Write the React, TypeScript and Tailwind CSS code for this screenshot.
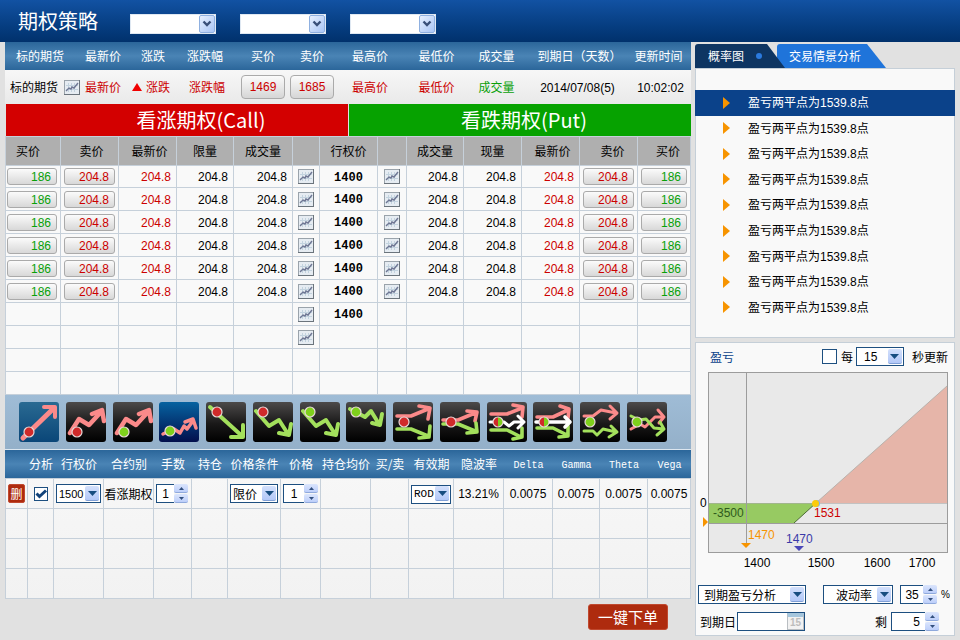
import { useState, type ReactNode } from 'react';
import clsx from 'clsx';

const MONO = "font-['Liberation_Mono','Noto_Sans_CJK_SC',monospace]";
const DIGITS = "font-['Liberation_Sans','Noto_Sans_CJK_SC',sans-serif]";

function Num({ children, className }: { children: ReactNode; className?: string }) {
  return <span className={clsx(DIGITS, className)}>{children}</span>;
}

function ChartGlyph() {
  return (
    <svg viewBox="0 0 16 15" className="block h-[15px] w-4" aria-hidden="true">
      <rect x="0.5" y="0.5" width="15" height="14" fill="#e6ecf2" stroke="#9aa3ab" />
      <path d="M0 14.5h16M15.5 0v15" stroke="#6b747c" />
      <path d="M4.500 3v9M7.500 3v9M10.500 3v9M2 5.500h12M2 9.500h12" stroke="#c3d3df" />
      <path d="M2 11l3-3 2 1 1-2 2 1 4-5" fill="none" stroke="#6f7794" strokeWidth="1.400" />
    </svg>
  );
}

function ChartButton({ label }: { label: string }) {
  return (
    <button type="button" aria-label={label} className="block">
      <ChartGlyph />
    </button>
  );
}

function HeaderSelect({ label }: { label: string }) {
  return (
    <div className="relative h-5 w-[86px]">
      <select
        aria-label={label}
        className="h-5 w-full appearance-none border border-[#dfe8f2] bg-white pl-1 text-xs text-black outline-none"
      >
        <option value=""></option>
      </select>
      <span className="pointer-events-none absolute top-px right-px flex h-[18px] w-4 items-center justify-center rounded-[2px] border border-[#8fb0e0] bg-linear-to-br from-[#e6effd] to-[#a9c5f5]">
        <svg viewBox="0 0 10 8" className="h-2 w-[10px]" aria-hidden="true">
          <path d="M1.500 1.500L5 5l3.500-3.500" fill="none" stroke="#3a5078" strokeWidth="2.400" />
        </svg>
      </span>
    </div>
  );
}

function Dropdown({
  label,
  options,
  width,
  font = 'text-xs',
  pad = 'pl-[2px]',
}: {
  label: string;
  options: string[];
  width: string;
  font?: string;
  pad?: string;
}) {
  return (
    <div className={clsx('relative h-[19px]', width)}>
      <select
        aria-label={label}
        className={clsx(
          'h-[19px] w-full appearance-none border border-[#1d4f80] bg-white leading-4 text-black outline-none',
          font,
          pad,
        )}
      >
        {options.map((o) => (
          <option key={o}>{o}</option>
        ))}
      </select>
      <span className="pointer-events-none absolute top-[2px] right-[2px] flex h-[15px] w-[14px] items-center justify-center rounded-[2px] border-b border-[#7f9fd6] bg-linear-to-b from-[#d3e0fb] to-[#b3c8f8]">
        <svg viewBox="0 0 9 5" className="h-[5px] w-[9px]" aria-hidden="true">
          <path d="M0 0h9L4.500 5z" fill="#174d80" />
        </svg>
      </span>
    </div>
  );
}

function Spinner({
  label,
  initial,
  width,
  align = 'text-center',
}: {
  label: string;
  initial: number;
  width: string;
  align?: string;
}) {
  const [value, setValue] = useState(initial);
  const step =
    'flex h-[9px] w-[14px] items-center justify-center rounded-[2px] border-b border-[#8fa9dc] bg-linear-to-b from-[#dbe5fc] to-[#bdcffa]';
  return (
    <div className="flex h-[19px]">
      <input
        type="text"
        inputMode="numeric"
        aria-label={label}
        value={value}
        onChange={(e) => setValue(Number(e.target.value) || 0)}
        className={clsx(
          'h-[19px] border border-r-0 border-[#1d4f80] bg-white text-xs text-black outline-none',
          DIGITS,
          width,
          align,
        )}
      />
      <div className="flex flex-col gap-px">
        <button type="button" aria-label={`${label} +`} className={step} onClick={() => setValue(value + 1)}>
          <svg viewBox="0 0 5 3" className="h-[3px] w-[5px]" aria-hidden="true">
            <path d="M0 3h5L2.500 0z" fill="#33507f" />
          </svg>
        </button>
        <button type="button" aria-label={`${label} -`} className={step} onClick={() => setValue(value - 1)}>
          <svg viewBox="0 0 5 3" className="h-[3px] w-[5px]" aria-hidden="true">
            <path d="M0 0h5L2.500 3z" fill="#33507f" />
          </svg>
        </button>
      </div>
    </div>
  );
}

function PriceButton({ children, color }: { children: ReactNode; color: string }) {
  return (
    <button
      type="button"
      className={clsx(
        DIGITS,
        'block h-[17px] w-full rounded-[3px] border border-[#aaaaaa] bg-linear-to-b from-[#fbfbfb] to-[#d8d8d8] pr-[5px] text-right leading-4',
        color,
      )}
    >
      {children}
    </button>
  );
}

const RED = 'text-[#cc0000]';
const GREEN = 'text-[#08a008]';

/* ---------- underlying quote ---------- */

const quoteCols = [
  'w-[76px]', 'w-[44px]', 'w-[52px]', 'w-[60px]', 'w-[52px]', 'w-[46px]',
  'w-[70px]', 'w-[63px]', 'w-[57px]', 'w-[105px]', 'w-[61px]',
];
const quoteHeads: [string, string][] = [
  ['标的期货', 'pr-[6px]'],
  ['最新价', ''],
  ['涨跌', 'pl-1'],
  ['涨跌幅', 'pr-1'],
  ['买价', ''],
  ['卖价', ''],
  ['最高价', ''],
  ['最低价', ''],
  ['成交量', ''],
  ['到期日（天数）', 'pl-1'],
  ['更新时间', 'pr-1'],
];

function BigPrice({ children }: { children: ReactNode }) {
  return (
    <button
      type="button"
      className={clsx(
        DIGITS,
        RED,
        'mx-auto block h-6 w-11 rounded-[4px] border border-[#aaaaaa] bg-linear-to-b from-[#fbfbfb] to-[#d6d6d6]',
      )}
    >
      {children}
    </button>
  );
}

function QuoteTable() {
  return (
    <table className="w-full table-fixed border-separate border-spacing-0 text-center whitespace-nowrap">
      <colgroup>
        {quoteCols.map((w, i) => (
          <col key={i} className={w} />
        ))}
      </colgroup>
      <thead className="bg-linear-to-b from-[#2b669a] via-[#4a84b5] to-[#2b669a] text-white">
        <tr>
          {quoteHeads.map(([h, pad]) => (
            <th key={h} scope="col" className="h-7 p-0 font-normal">
              <span className={pad}>{h}</span>
            </th>
          ))}
        </tr>
      </thead>
      <tbody className="bg-linear-to-b from-[#f7f7f7] to-[#e9e9e9]">
        <tr>
          <td className="h-[34px] p-0">
            <div className="flex items-center gap-[6px] pl-[5px]">
              标的期货
              <ChartButton label="标的期货走势图" />
            </div>
          </td>
          <td className={clsx('p-0', RED)}>最新价</td>
          <td className={clsx('p-0', RED)}>
            <div className="flex items-center justify-center gap-1">
              <svg viewBox="0 0 10 8" className="h-2 w-[10px]" aria-hidden="true">
                <path d="M0 8h10L5 0z" fill="#f00000" />
              </svg>
              涨跌
            </div>
          </td>
          <td className={clsx('p-0', RED)}>涨跌幅</td>
          <td className="p-0">
            <BigPrice>1469</BigPrice>
          </td>
          <td className="p-0">
            <BigPrice>1685</BigPrice>
          </td>
          <td className={clsx('p-0', RED)}>最高价</td>
          <td className={clsx('p-0', RED)}>最低价</td>
          <td className={clsx('p-0', GREEN)}>成交量</td>
          <td className="p-0">
            <Num>2014/07/08(5)</Num>
          </td>
          <td className="p-0">
            <Num>10:02:02</Num>
          </td>
        </tr>
      </tbody>
    </table>
  );
}

/* ---------- option chain ---------- */

const chainCols = [
  'w-[56px]', 'w-[58px]', 'w-[58px]', 'w-[57px]', 'w-[59px]', 'w-[27px]', 'w-[58px]',
  'w-[29px]', 'w-[57px]', 'w-[58px]', 'w-[58px]', 'w-[58px]', 'w-[53px]',
];
const chainHeads: [string, string][] = [
  ['买价', 'pr-[10px]'],
  ['卖价', 'pl-1'],
  ['最新价', 'pl-1'],
  ['限量', ''],
  ['成交量', ''],
  ['', ''],
  ['行权价', ''],
  ['', ''],
  ['成交量', ''],
  ['现量', ''],
  ['最新价', 'pl-1'],
  ['卖价', 'pl-2'],
  ['买价', 'pl-2'],
];

const quotes = Array.from({ length: 6 }, () => ({ bid: '186', ask: '204.8', last: '204.8', size: '204.8', volume: '204.8' }));
const strikes = ['1400', '1400', '1400', '1400', '1400', '1400', '1400', '', '', ''];

const cell = 'border-r border-b border-[#c6d0da] p-0';
const numCell = 'border-r border-b border-[#c6d0da] py-0 pr-[5px] pl-0 text-right';

function ChainTable() {
  return (
    <table className="w-full table-fixed border-separate border-spacing-0 bg-[#f9f9f9] whitespace-nowrap">
      <colgroup>
        {chainCols.map((w, i) => (
          <col key={i} className={w} />
        ))}
      </colgroup>
      <thead className="bg-[#afafaf]">
        <tr>
          {chainHeads.map(([h, pad], i) => (
            <th
              key={i}
              scope="col"
              className="h-[30px] border-t border-r border-b border-[#c6d0da] p-0 text-center font-normal first:border-l"
            >
              <span className={pad}>{h}</span>
            </th>
          ))}
        </tr>
      </thead>
      <tbody>
        {strikes.map((strike, i) => {
          const q = quotes[i];
          return (
            <tr key={i} className="h-[23px] first:h-[22px]">
              <td className={clsx(cell, 'border-l')}>
                {q && (
                  <div className="pr-[3px] pl-px">
                    <PriceButton color={GREEN}>{q.bid}</PriceButton>
                  </div>
                )}
              </td>
              <td className={cell}>
                {q && (
                  <div className="px-[3px]">
                    <PriceButton color={RED}>{q.ask}</PriceButton>
                  </div>
                )}
              </td>
              <td className={numCell}>{q && <Num className={RED}>{q.last}</Num>}</td>
              <td className={numCell}>{q && <Num>{q.size}</Num>}</td>
              <td className={numCell}>{q && <Num>{q.volume}</Num>}</td>
              <td className={cell}>
                {i < 8 && (
                  <div className="flex justify-center">
                    <ChartButton label="看涨走势图" />
                  </div>
                )}
              </td>
              <td className={clsx(cell, 'text-center')}>
                <span className={clsx(MONO, 'font-bold')}>{strike}</span>
              </td>
              <td className={cell}>
                {q && (
                  <div className="flex justify-center">
                    <ChartButton label="看跌走势图" />
                  </div>
                )}
              </td>
              <td className={numCell}>{q && <Num>{q.volume}</Num>}</td>
              <td className={numCell}>{q && <Num>{q.size}</Num>}</td>
              <td className={numCell}>{q && <Num className={RED}>{q.last}</Num>}</td>
              <td className={cell}>
                {q && (
                  <div className="px-[3px]">
                    <PriceButton color={RED}>{q.ask}</PriceButton>
                  </div>
                )}
              </td>
              <td className={cell}>
                {q && (
                  <div className="px-[3px]">
                    <PriceButton color={GREEN}>{q.bid}</PriceButton>
                  </div>
                )}
              </td>
            </tr>
          );
        })}
      </tbody>
    </table>
  );
}

/* ---------- strategy toolbar ---------- */

const PINK = '#fb8a8a';
const LIME = '#a3e05c';
const WHITE = '#ffffff';

type Strategy = {
  name: string;
  bg: string;
  lines: [string, string, number][];
  dot: [number, number, 'red' | 'green' | 'both'];
};

const upZig = 'M4 31L13 17L23 23L34 11M26 12L36 8L38 19';
const downZig = 'M3 9L16 24L26 18L35 32M38 22L36 33L26 31';

const strategies: Strategy[] = [
  { name: '买入期货', bg: 'url(#tile-teal)', lines: [['M4 36L35 6', PINK, 5], ['M25 5H36V15', PINK, 4]], dot: [10, 30, 'red'] },
  { name: '买入看涨', bg: 'url(#tile-black)', lines: [[upZig, PINK, 4.5]], dot: [11, 30, 'red'] },
  { name: '看涨价差', bg: 'url(#tile-black)', lines: [[upZig, PINK, 4.5]], dot: [11, 30, 'green'] },
  { name: '卖出看跌', bg: 'url(#tile-navy)', lines: [['M4 32L15 27L21 31L25 24L28 27L34 19M26 20L34 17L37 26', PINK, 3.5]], dot: [11, 29, 'green'] },
  { name: '卖出期货', bg: 'url(#tile-black)', lines: [['M4 5L36 34M37 23V35H25', LIME, 4]], dot: [11, 10, 'red'] },
  { name: '买入看跌', bg: 'url(#tile-black)', lines: [[downZig, LIME, 4]], dot: [10, 10, 'red'] },
  { name: '看跌价差', bg: 'url(#tile-black)', lines: [[downZig, LIME, 4]], dot: [10, 10, 'green'] },
  { name: '卖出看涨', bg: 'url(#tile-black)', lines: [['M4 7L19 15L25 9L33 22M36 12L34 23L26 21', LIME, 4]], dot: [10, 10, 'green'] },
  {
    name: '买入跨式',
    bg: 'url(#tile-black)',
    lines: [
      ['M4 14H18L35 7M26 4L37 6L35 17', PINK, 3.6],
      ['M4 27H18L35 34M37 24L36 35L26 36', LIME, 3.6],
    ],
    dot: [11, 20, 'red'],
  },
  {
    name: '买入宽跨式',
    bg: 'url(#tile-black)',
    lines: [
      ['M3 18H18L35 11M27 9L37 10L35 19', PINK, 3.6],
      ['M3 22H18L35 29M36 21L37 30L27 31', LIME, 3.6],
    ],
    dot: [11, 20, 'red'],
  },
  {
    name: '多头蝶式',
    bg: 'url(#tile-black)',
    lines: [
      ['M4 12H20L35 6M26 3L36 5L35 15', PINK, 3.6],
      ['M4 28H20L34 35M35 26V35L26 37', LIME, 3.6],
      ['M3 20H17L22 24L27 20H37M31 14L37 20L31 26', WHITE, 3],
    ],
    dot: [11, 20, 'both'],
  },
  {
    name: '多头鹰式',
    bg: 'url(#tile-black)',
    lines: [
      ['M4 15H20L35 8M27 4L36 7L35 16', PINK, 3.6],
      ['M4 26H20L34 33M35 24V34L26 35', LIME, 3.6],
      ['M3 20H37M32 15L37 20L32 25', WHITE, 3.6],
    ],
    dot: [11, 20, 'both'],
  },
  {
    name: '卖出跨式',
    bg: 'url(#tile-black)',
    lines: [
      ['M4 14H13L21 8L36 11M30 4L37 11L30 17', PINK, 3],
      ['M4 29H13L17 33L23 27L36 30M31 24L37 30L29 35', LIME, 3],
    ],
    dot: [10, 20, 'green'],
  },
  {
    name: '卖出宽跨式',
    bg: 'url(#tile-black)',
    lines: [
      ['M4 27L13 22L18 25L28 15H37M31 8L37 15L32 21', PINK, 3],
      ['M4 14L12 18L19 17L27 26L37 27M33 20L37 27L30 33', LIME, 3],
    ],
    dot: [10, 20, 'green'],
  },
];

function StrategyIcon({ s }: { s: Strategy }) {
  const [cx, cy, kind] = s.dot;
  return (
    <svg viewBox="0 0 40 40" className="block h-10 w-10" aria-hidden="true">
      <rect x="0" y="0" width="40" height="40" rx="3" fill={s.bg} />
      {s.lines.map(([d, stroke, w]) => (
        <path key={d} d={d} fill="none" stroke={stroke} strokeWidth={w} strokeLinejoin="round" strokeLinecap="round" />
      ))}
      <circle cx={cx} cy={cy} r="5" fill={kind === 'green' ? '#7fd01c' : '#d02a2a'} />
      {kind === 'both' && <path d={`M${cx} ${cy - 5}a5 5 0 0 1 0 10z`} fill="#7fd01c" />}
      <circle cx={cx} cy={cy} r="5" fill="none" stroke="#e8d8d8" strokeWidth="1.200" />
    </svg>
  );
}

function Gradients() {
  return (
    <svg className="absolute h-0 w-0" aria-hidden="true">
      <defs>
        <linearGradient id="tile-black" x1="0" y1="0" x2="0" y2="1">
          <stop offset="0" stopColor="#4c4a4a" />
          <stop offset="0.550" stopColor="#191818" />
          <stop offset="1" stopColor="#000000" />
        </linearGradient>
        <linearGradient id="tile-teal" x1="0" y1="0" x2="0" y2="1">
          <stop offset="0" stopColor="#2a6a92" />
          <stop offset="1" stopColor="#0a4678" />
        </linearGradient>
        <linearGradient id="tile-navy" x1="0" y1="0" x2="0" y2="1">
          <stop offset="0" stopColor="#0662a0" />
          <stop offset="1" stopColor="#020f4c" />
        </linearGradient>
      </defs>
    </svg>
  );
}

function StrategyBar() {
  return (
    <div className="relative flex h-[55px] items-center justify-between border-b border-[#dce6ef] bg-linear-to-b from-[#9fbcd6] to-[#94b0c9] pr-6 pl-[14px]">
      <Gradients />
      {strategies.map((s) => (
        <button key={s.name} type="button" aria-label={s.name}>
          <StrategyIcon s={s} />
        </button>
      ))}
    </div>
  );
}

/* ---------- positions ---------- */

const posCols = [
  'w-[23px]', 'w-[26px]', 'w-[50px]', 'w-[50px]', 'w-[38px]', 'w-[36px]', 'w-[53px]', 'w-[40px]',
  'w-[50px]', 'w-[38px]', 'w-[45px]', 'w-[50px]', 'w-[49px]', 'w-[47px]', 'w-[48px]', 'w-[43px]',
];
const posHeads = ['', '分析', '行权价', '合约别', '手数', '持仓', '价格条件', '价格', '持仓均价', '买/卖', '有效期', '隐波率'];
const greeks = ['Delta', 'Gamma', 'Theta', 'Vega'];

function PositionTable() {
  return (
    <table className="w-full table-fixed border-separate border-spacing-0 bg-linear-to-b from-[#f8f8f8] to-[#f2f2f2] text-center whitespace-nowrap">
      <colgroup>
        {posCols.map((w, i) => (
          <col key={i} className={w} />
        ))}
      </colgroup>
      <thead className="bg-linear-to-b from-[#2b669a] via-[#4a84b5] to-[#2b669a] text-white">
        <tr>
          {posHeads.map((h) => (
            <th key={h} scope="col" className="h-7 p-0 font-normal">
              <div className="flex justify-center">{h}</div>
            </th>
          ))}
          {greeks.map((g) => (
            <th key={g} scope="col" className="h-7 p-0 font-normal">
              <span className={clsx(MONO, 'text-[10px]')}>{g}</span>
            </th>
          ))}
        </tr>
      </thead>
      <tbody>
        <tr>
          <td className={clsx(cell, 'h-[31px] border-t border-l')}>
            <button
              type="button"
              className="mx-auto block h-[19px] w-[17px] rounded-[2px] border border-[#c0492f] bg-[#ae2b0e] text-xs leading-4 text-white"
            >
              删
            </button>
          </td>
          <td className={clsx(cell, 'border-t')}>
            <div className="relative mx-auto h-[14px] w-[14px]">
              <input
                type="checkbox"
                defaultChecked
                aria-label="分析"
                className="peer block h-[14px] w-[14px] appearance-none border border-[#1d4f80] bg-white"
              />
              <svg
                viewBox="0 0 14 14"
                className="pointer-events-none absolute inset-0 hidden h-[14px] w-[14px] peer-checked:block"
                aria-hidden="true"
              >
                <path d="M2.500 6.500L5.500 9.500L12 3.500" fill="none" stroke="#12437a" strokeWidth="3" />
              </svg>
            </div>
          </td>
          <td className={clsx(cell, 'border-t')}>
            <div className="flex justify-center">
              <Dropdown label="行权价" options={['1500']} width="w-[45px]" font={clsx(DIGITS, 'text-[11px]')} />
            </div>
          </td>
          <td className={clsx(cell, 'border-t')}>看涨期权</td>
          <td className={clsx(cell, 'border-t')}>
            <div className="flex pl-[2px]">
              <Spinner label="手数" initial={1} width="w-[18px]" />
            </div>
          </td>
          <td className={clsx(cell, 'border-t')} />
          <td className={clsx(cell, 'border-t')}>
            <div className="flex justify-center">
              <Dropdown label="价格条件" options={['限价']} width="w-[48px]" />
            </div>
          </td>
          <td className={clsx(cell, 'border-t')}>
            <div className="flex pl-[2px]">
              <Spinner label="价格" initial={1} width="w-[21px]" />
            </div>
          </td>
          <td className={clsx(cell, 'border-t')} />
          <td className={clsx(cell, 'border-t')} />
          <td className={clsx(cell, 'border-t')}>
            <div className="flex justify-center">
              <Dropdown label="有效期" options={['ROD']} width="w-[40px]" font={clsx(MONO, 'text-[11px]')} />
            </div>
          </td>
          <td className={clsx(cell, 'border-t')}>
            <Num>13.21%</Num>
          </td>
          {greeks.map((g) => (
            <td key={g} className={clsx(cell, 'border-t')}>
              <Num>0.0075</Num>
            </td>
          ))}
        </tr>
        {[0, 1, 2].map((r) => (
          <tr key={r}>
            {posCols.map((_, i) => (
              <td key={i} className={clsx(cell, 'h-[30px] first:border-l')} />
            ))}
          </tr>
        ))}
      </tbody>
    </table>
  );
}

/* ---------- right side ---------- */

function BreakEvenPanel() {
  const [active, setActive] = useState(0);
  return (
    <section>
      <div role="tablist" className="flex h-6 text-white">
        <button
          type="button"
          role="tab"
          aria-selected="true"
          className="relative z-10 flex w-[90px] items-center gap-3 rounded-tl-[3px] bg-[#0e3562] pl-[13px] [clip-path:polygon(0_0,72px_0,100%_100%,0_100%)]"
        >
          概率图
          <span className="h-[6px] w-[6px] rounded-full bg-[#2b7ade]" />
        </button>
        <button
          type="button"
          role="tab"
          aria-selected="false"
          className="-ml-2 w-[109px] rounded-tl-[3px] bg-[#1f74da] pl-3 text-left [clip-path:polygon(0_0,90px_0,100%_100%,0_100%)]"
        >
          交易情景分析
        </button>
      </div>
      <div className="border border-[#c5cfd8] bg-[#f9f9f9] pt-[21px] pb-[17px]">
        <ul className="-mx-px grid h-[230px] auto-rows-fr">
          {Array.from({ length: 9 }, (_, i) => (
            <li key={i} className="grid">
              <button
                type="button"
                onClick={() => setActive(i)}
                className={clsx(
                  'flex items-center gap-[18px] pl-7 text-left',
                  i === active ? 'bg-[#0b428a] text-white' : 'text-black',
                )}
              >
                <svg viewBox="0 0 7 12" className="h-3 w-[7px]" aria-hidden="true">
                  <path d="M0 0v12l7-6z" fill="#f79400" />
                </svg>
                <span>
                  盈亏两平点为<Num>1539.8</Num>点
                </span>
              </button>
            </li>
          ))}
        </ul>
      </div>
    </section>
  );
}

function ProfitChart() {
  return (
    <svg
      viewBox="696 372 258 200"
      className={clsx(DIGITS, 'mt-[6px] block w-full text-xs')}
      role="img"
      aria-label="盈亏图"
    >
      <rect x="708.500" y="372.500" width="239" height="180" fill="#e9e9e9" />
      <path d="M816 503L947 386V503z" fill="#e6b5a9" />
      <path d="M816 503L947 386" stroke="#b9b2ac" />
      <path d="M709 503H816L794 523H709z" fill="#97ca62" />
      <path d="M794 523L816 503" stroke="#4c6b35" />
      <path d="M709 503.500H947" stroke="#a9a9a9" strokeOpacity="0.600" />
      <path d="M709 523.500H947M746.500 373V544" stroke="#9c9c9c" />
      <rect x="708.500" y="372.500" width="239" height="180" fill="none" stroke="#9c9c9c" />
      <circle cx="816.500" cy="503.500" r="3.500" fill="#7fb2ea" />
      <circle cx="815.500" cy="503.500" r="3.500" fill="#fccb0a" />
      <path d="M703 517v10l5-5z" fill="#f79400" />
      <path d="M741 543h10l-5 5z" fill="#f79400" />
      <path d="M794 546h10l-5 5z" fill="#4a48b8" />
      <text x="700" y="507" fill="#000">0</text>
      <text x="713" y="517" fill="#2f5a1c">-3500</text>
      <text x="814" y="517" fill="#cc0000">1531</text>
      <text x="748" y="539" fill="#f79400">1470</text>
      <text x="786" y="543" fill="#3a3aa8">1470</text>
      <g fill="#000" textAnchor="middle">
        <text x="757" y="567">1400</text>
        <text x="821" y="567">1500</text>
        <text x="877" y="567">1600</text>
        <text x="922" y="567">1700</text>
      </g>
    </svg>
  );
}

function ProfitPanel() {
  return (
    <section className="border border-[#c5cfd8] bg-[#f9f9f9] pt-1 pb-1">
      <div className="flex h-[19px] items-center pr-[6px] pl-[14px]">
        <h2 className="mr-auto text-[#0b428a]">盈亏</h2>
        <label className="flex items-center gap-1">
          <input type="checkbox" className="h-[15px] w-[15px] appearance-none border border-[#1d4f80] bg-white checked:bg-[#1d4f80]" />
          每
        </label>
        <div className="mr-2 ml-[3px]">
          <Dropdown label="更新秒数" options={['15']} width="w-[48px]" font={clsx(DIGITS, 'text-xs')} pad="pl-[7px]" />
        </div>
        <span>秒更新</span>
      </div>
      <ProfitChart />
      <div className="mt-[13px] flex h-[19px] items-center pr-1 pl-[2px]">
        <Dropdown label="分析方式" options={['到期盈亏分析']} width="w-[108px]" pad="pl-[5px]" />
        <div className="mr-[7px] ml-auto">
          <Dropdown label="指标" options={['波动率']} width="w-[70px]" pad="pl-3" />
        </div>
        <Spinner label="波动率" initial={35} width="w-[23px]" />
        <Num className="ml-1 text-[10px]">%</Num>
      </div>
      <div className="mt-2 flex h-[19px] items-center pr-[15px] pl-1">
        <label htmlFor="expiry" className="mr-px">
          到期日
        </label>
        <div className="relative h-[19px] w-[68px]">
          <input
            id="expiry"
            type="text"
            className={clsx(DIGITS, 'h-[19px] w-full border border-[#1d4f80] bg-white pl-1 text-xs outline-none')}
          />
          <button
            type="button"
            aria-label="选择日期"
            className="absolute top-px right-px flex h-[17px] w-[17px] items-end justify-center border border-t-4 border-[#b9bec2] border-t-[#a5c6dd] bg-[#f2f2f2] font-['Liberation_Sans',sans-serif] text-[10px] leading-3 font-bold text-[#bdbdbd]"
          >
            15
          </button>
        </div>
        <span className="mr-1 ml-auto">剩</span>
        <Spinner label="剩余天数" initial={5} width="w-[34px]" align="text-right pr-[5px]" />
      </div>
    </section>
  );
}

export default function App() {
  return (
    <div className="min-h-screen bg-[#e1e1e1] font-['Noto_Sans_CJK_SC',sans-serif] text-xs leading-4 text-black">
      <header className="flex h-[42px] items-center bg-linear-to-b from-[#1252a3] to-[#01316c] pl-[18px]">
        <h1 className="mr-8 text-xl text-white">期权策略</h1>
        <div className="flex gap-6 pt-[5px]">
          <HeaderSelect label="品种" />
          <HeaderSelect label="月份" />
          <HeaderSelect label="策略" />
        </div>
      </header>
      <main className="flex gap-1 px-[5px]">
        <div className="min-w-0 flex-1">
          <QuoteTable />
          <div className="grid h-8 grid-cols-2 gap-px pl-px text-xl leading-8 text-white">
            <h2 className="bg-[#d30000] pl-12 text-center">看涨期权(Call)</h2>
            <h2 className="bg-[#06a200] pl-2 text-center">看跌期权(Put)</h2>
          </div>
          <ChainTable />
          <StrategyBar />
          <PositionTable />
          <div className="flex justify-end pt-[5px] pr-[23px]">
            <button
              type="button"
              className="h-[26px] w-20 rounded-[3px] border border-[#c0492f] bg-[#ae2b0e] text-[15px] leading-6 text-white"
            >
              一键下单
            </button>
          </div>
        </div>
        <aside className="flex w-[260px] shrink-0 flex-col gap-1 pt-[2px]">
          <BreakEvenPanel />
          <ProfitPanel />
        </aside>
      </main>
    </div>
  );
}
